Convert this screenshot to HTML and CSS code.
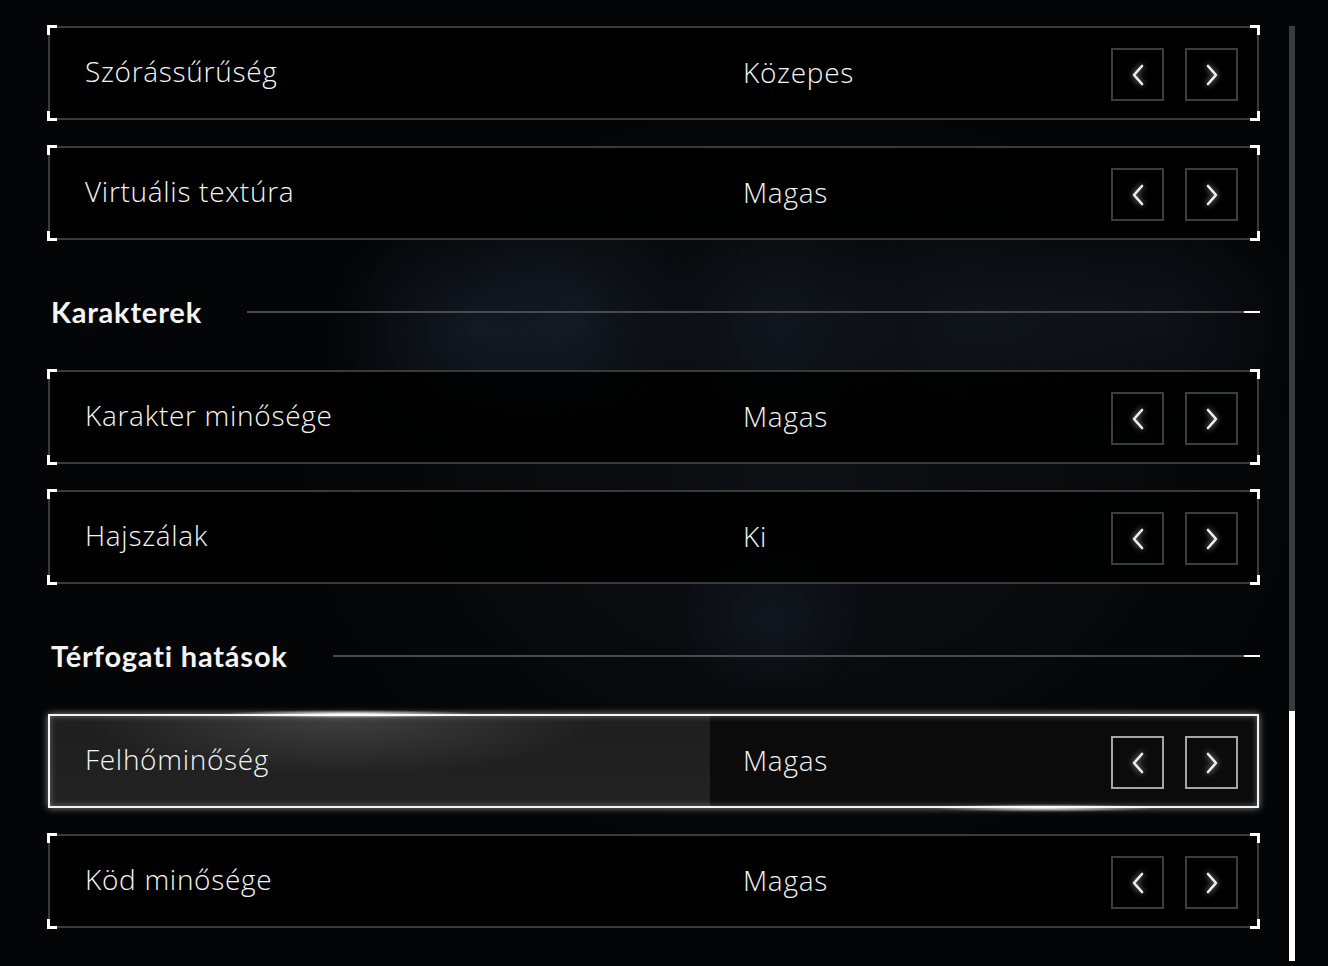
FILE: index.html
```html
<!DOCTYPE html>
<html lang="hu">
<head>
<meta charset="utf-8">
<title>Beállítások</title>
<link rel="stylesheet" href="styles.css">
</head>
<body>
<div class="page">
  <div class="list">
    <div class="row">
      <div class="label">Szórássűrűség</div>
      <div class="value">Közepes</div>
      <div class="buttons">
        <div class="btn"><svg viewBox="0 0 14 24" class="chev"><polyline points="11,3 3,12 11,21"/></svg></div>
        <div class="btn"><svg viewBox="0 0 14 24" class="chev"><polyline points="3,3 11,12 3,21"/></svg></div>
      </div>
    </div>
    <div class="row">
      <div class="label">Virtuális textúra</div>
      <div class="value">Magas</div>
      <div class="buttons">
        <div class="btn"><svg viewBox="0 0 14 24" class="chev"><polyline points="11,3 3,12 11,21"/></svg></div>
        <div class="btn"><svg viewBox="0 0 14 24" class="chev"><polyline points="3,3 11,12 3,21"/></svg></div>
      </div>
    </div>
    <div class="section">
      <div class="section-title">Karakterek</div>
      <div class="section-line"></div>
      <div class="section-dash"></div>
    </div>
    <div class="row">
      <div class="label">Karakter minősége</div>
      <div class="value">Magas</div>
      <div class="buttons">
        <div class="btn"><svg viewBox="0 0 14 24" class="chev"><polyline points="11,3 3,12 11,21"/></svg></div>
        <div class="btn"><svg viewBox="0 0 14 24" class="chev"><polyline points="3,3 11,12 3,21"/></svg></div>
      </div>
    </div>
    <div class="row">
      <div class="label">Hajszálak</div>
      <div class="value">Ki</div>
      <div class="buttons">
        <div class="btn"><svg viewBox="0 0 14 24" class="chev"><polyline points="11,3 3,12 11,21"/></svg></div>
        <div class="btn"><svg viewBox="0 0 14 24" class="chev"><polyline points="3,3 11,12 3,21"/></svg></div>
      </div>
    </div>
    <div class="section">
      <div class="section-title">Térfogati hatások</div>
      <div class="section-line"></div>
      <div class="section-dash"></div>
    </div>
    <div class="row active">
      <div class="label">Felhőminőség</div>
      <div class="value">Magas</div>
      <div class="buttons">
        <div class="btn"><svg viewBox="0 0 14 24" class="chev"><polyline points="11,3 3,12 11,21"/></svg></div>
        <div class="btn"><svg viewBox="0 0 14 24" class="chev"><polyline points="3,3 11,12 3,21"/></svg></div>
      </div>
      <div class="glare-top"></div>
      <div class="glare-bottom"></div>
    </div>
    <div class="row">
      <div class="label">Köd minősége</div>
      <div class="value">Magas</div>
      <div class="buttons">
        <div class="btn"><svg viewBox="0 0 14 24" class="chev"><polyline points="11,3 3,12 11,21"/></svg></div>
        <div class="btn"><svg viewBox="0 0 14 24" class="chev"><polyline points="3,3 11,12 3,21"/></svg></div>
      </div>
    </div>
  </div>
  <div class="scrollbar">
    <div class="thumb"></div>
  </div>
</div>
</body>
</html>
```
FILE: styles.css
```css
html, body {
  margin: 0;
  padding: 0;
}
body {
  width: 1328px;
  height: 966px;
  overflow: hidden;
  font-family: "Open Sans", "Noto Sans", sans-serif;
  color: #f4f4f4;
  background-color: #040506;
  background-image:
    radial-gradient(ellipse 140px 130px at 470px 330px, rgba(40,55,80,0.35), rgba(0,0,0,0)),
    radial-gradient(ellipse 120px 140px at 580px 320px, rgba(35,48,70,0.35), rgba(0,0,0,0)),
    radial-gradient(ellipse 130px 120px at 780px 320px, rgba(35,48,70,0.3), rgba(0,0,0,0)),
    radial-gradient(ellipse 160px 120px at 980px 320px, rgba(35,45,65,0.3), rgba(0,0,0,0)),
    radial-gradient(ellipse 160px 120px at 1150px 320px, rgba(35,45,65,0.3), rgba(0,0,0,0)),
    radial-gradient(ellipse 100px 80px at 770px 620px, rgba(35,48,70,0.3), rgba(0,0,0,0)),
    radial-gradient(ellipse 500px 380px at 800px 480px, rgba(14,17,22,0.9), rgba(0,0,0,0));
}
.page {
  display: flex;
  padding-left: 48px;
}
.list {
  width: 1211px;
  padding-top: 26px;
  display: flex;
  flex-direction: column;
  gap: 26px;
}
.row {
  position: relative;
  height: 94px;
  box-sizing: border-box;
  border: 2px solid #3a3a3a;
  background: rgba(0,0,0,0.88);
  display: grid;
  grid-template-columns: 693px 1fr auto;
  align-items: center;
  font-size: 28px;
  font-weight: 300;
}
.row::before {
  content: "";
  position: absolute;
  inset: -3px;
  pointer-events: none;
  background:
    linear-gradient(#fff,#fff) left top / 10px 3px no-repeat,
    linear-gradient(#fff,#fff) left top / 3px 10px no-repeat,
    linear-gradient(#fff,#fff) right top / 10px 3px no-repeat,
    linear-gradient(#fff,#fff) right top / 3px 10px no-repeat,
    linear-gradient(#fff,#fff) left bottom / 10px 3px no-repeat,
    linear-gradient(#fff,#fff) left bottom / 3px 10px no-repeat,
    linear-gradient(#fff,#fff) right bottom / 10px 3px no-repeat,
    linear-gradient(#fff,#fff) right bottom / 3px 10px no-repeat;
}
.label {
  padding-left: 35px;
  letter-spacing: 0.7px;
  line-height: 1;
  margin-top: -4px;
}
.value {
  letter-spacing: 0.7px;
  line-height: 1;
  margin-top: -2px;
}
.buttons {
  display: flex;
  gap: 21px;
  padding-right: 19px;
  margin-top: 3px;
}
.btn {
  width: 53px;
  height: 53px;
  box-sizing: border-box;
  border: 2px solid #3d3d3d;
  display: flex;
  align-items: center;
  justify-content: center;
}
.chev {
  width: 14px;
  height: 24px;
  overflow: visible;
  filter: drop-shadow(0 0 3px rgba(255,255,255,0.7));
}
.chev polyline {
  fill: none;
  stroke: #f0f0f0;
  stroke-width: 2.6;
  stroke-linecap: round;
  stroke-linejoin: round;
}
.row.active {
  border-color: #f4f4f4;
  box-shadow: 0 0 7px rgba(255,255,255,0.55), inset 0 0 6px rgba(255,255,255,0.35);
  background:
    radial-gradient(ellipse 260px 60px at 290px 0px, rgba(255,255,255,0.15), rgba(255,255,255,0) 100%) no-repeat,
    linear-gradient(180deg, #1e1e1e, #232323) left top / 660px 100% no-repeat,
    #0b0b0b;
}
.row.active::before {
  display: none;
}
.row.active .btn {
  border-color: #a6a6a6;
}
.glare-top {
  position: absolute;
  left: 170px;
  top: -6px;
  width: 260px;
  height: 8px;
  background: radial-gradient(ellipse 50% 50% at 50% 50%, rgba(255,255,255,0.95), rgba(255,255,255,0) 100%);
  pointer-events: none;
}
.glare-bottom {
  position: absolute;
  left: 880px;
  bottom: -6px;
  width: 230px;
  height: 8px;
  background: radial-gradient(ellipse 50% 50% at 50% 50%, rgba(255,255,255,0.9), rgba(255,255,255,0) 100%);
  pointer-events: none;
}
.section {
  display: flex;
  align-items: center;
  height: 40px;
  margin-top: 26px;
  margin-bottom: 12px;
  padding-left: 3px;
}
.section-title {
  font-family: "Lato", "Noto Sans", sans-serif;
  font-weight: 700;
  font-size: 29px;
  letter-spacing: 0.8px;
  margin-right: 45px;
  margin-top: -2px;
}
.section-line {
  flex: 1;
  height: 2px;
  background: #4a4a4a;
}
.section-dash {
  width: 16px;
  height: 2px;
  background: #ffffff;
  margin-right: -1px;
}
.scrollbar {
  margin-left: 30px;
  margin-top: 26px;
  width: 6px;
  height: 935px;
  background: #3a3b3e;
  display: flex;
  flex-direction: column;
  justify-content: flex-end;
}
.thumb {
  height: 250px;
  background: #ffffff;
}
```
